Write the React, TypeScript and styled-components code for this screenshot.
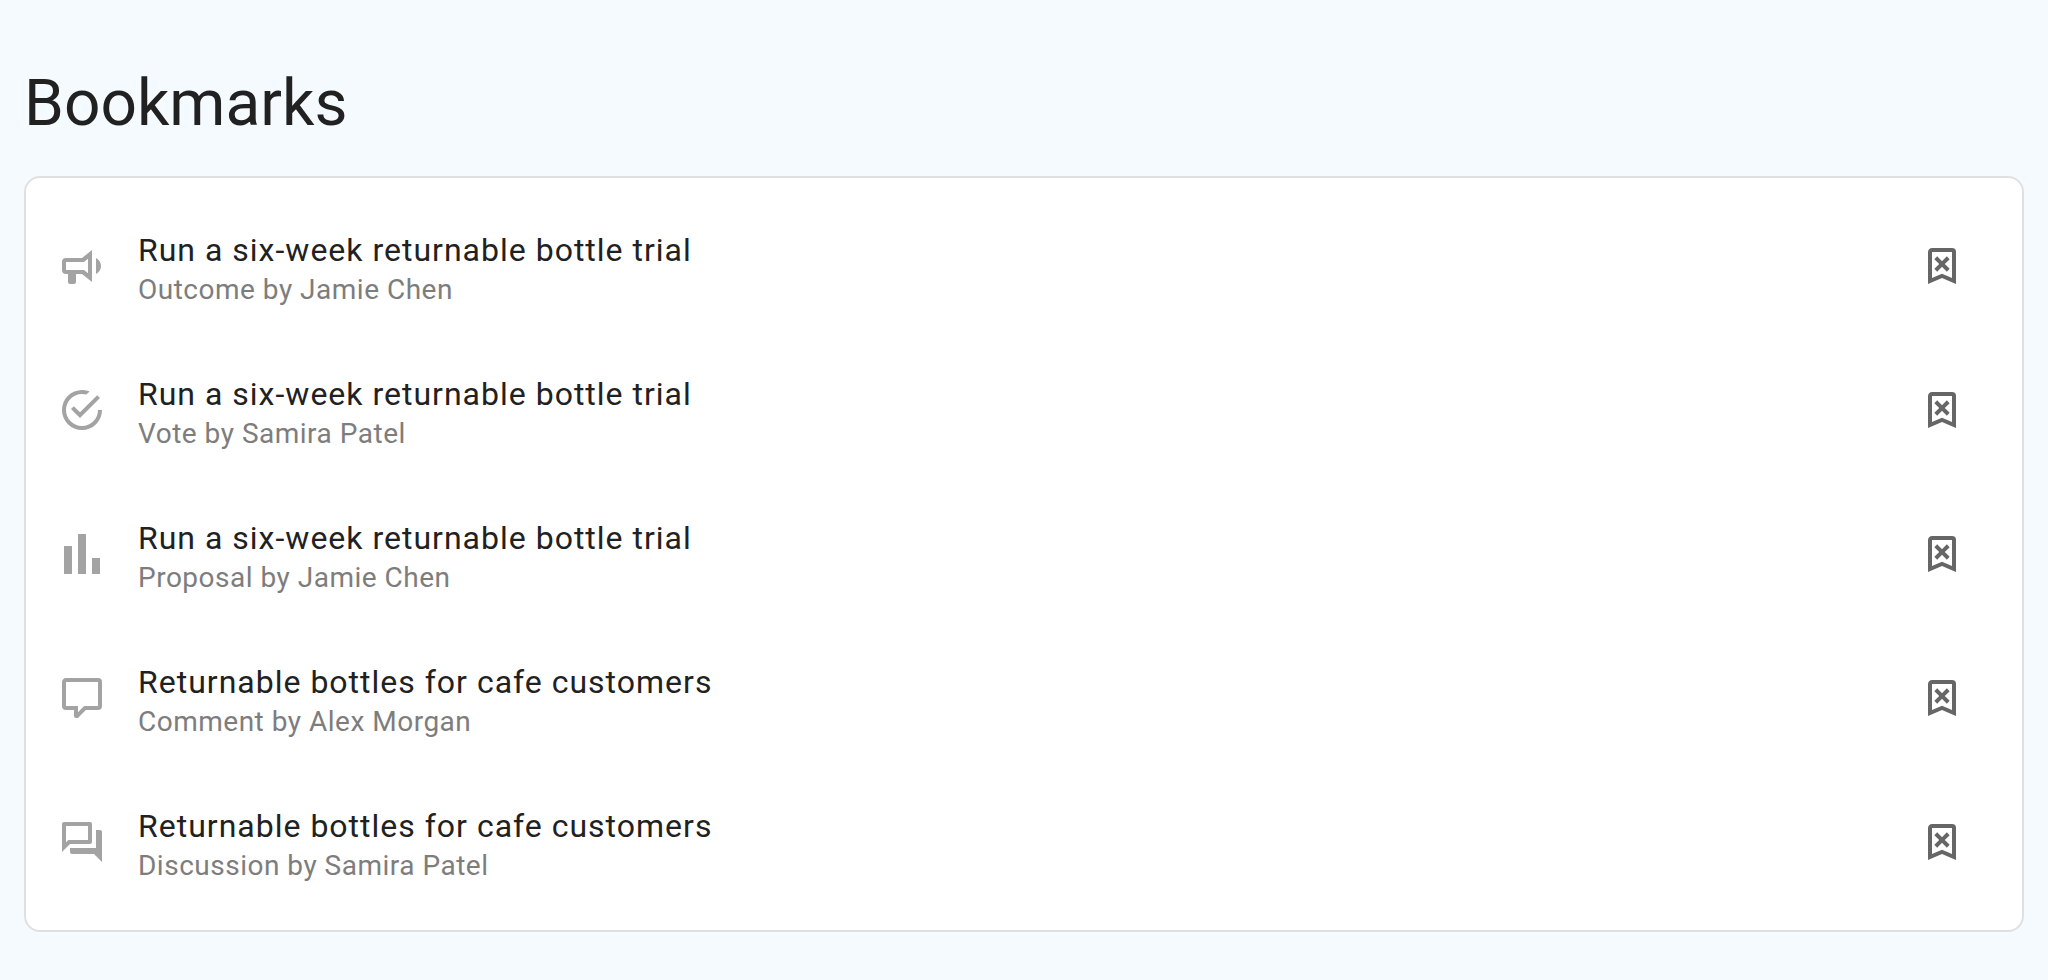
import React from "react";
import styled, { createGlobalStyle } from "styled-components";

const GlobalStyle = createGlobalStyle`
  *, *::before, *::after { box-sizing: border-box; }
  body {
    margin: 0;
    background: #f5faff;
    color: #212121;
    font-family: Roboto, "Liberation Sans", sans-serif;
    -webkit-font-smoothing: antialiased;
  }
`;

const Page = styled.main`
  padding: 64px 24px 40px;
`;

const Heading = styled.h1`
  margin: 0 0 32px;
  font-size: 64px;
  font-weight: 400;
  line-height: 80px;
`;

const Card = styled.ul`
  margin: 0;
  padding: 16px 0;
  list-style: none;
  background: #fff;
  border: 2px solid #e0e0e0;
  border-radius: 16px;
`;

const Row = styled.li`
  display: flex;
  align-items: center;
  gap: 32px;
  min-height: 144px;
  padding: 0 32px;
`;

const Icon = styled.svg<{ $color: string }>`
  display: block;
  flex: none;
  width: 48px;
  height: 48px;
  fill: ${(p) => p.$color};
`;

const ItemLink = styled.a`
  flex: 1;
  min-width: 0;
  padding-top: 8px;
  color: inherit;
  text-decoration: none;
`;

const Title = styled.div`
  font-size: 32px;
  line-height: 40px;
  letter-spacing: 1px;
`;

const Subtitle = styled.div`
  color: #7d7d7d;
  font-size: 28px;
  line-height: 40px;
  letter-spacing: 0.0178571em;
`;

const RemoveButton = styled.button`
  display: grid;
  flex: none;
  place-items: center;
  width: 96px;
  height: 96px;
  padding: 0;
  background: none;
  border: 0;
  border-radius: 50%;
  cursor: pointer;

  &:hover { background: #f5f5f5; }
`;

const icons = {
  outcome:
    "M12,8H4A2,2 0 0,0 2,10V14A2,2 0 0,0 4,16H5V20A1,1 0 0,0 6,21H8A1,1 0 0,0 9,20V16H12L17,20V4L12,8M15,15.6L13,14H4V10H13L15,8.4V15.6M21.5,12C21.5,13.71 20.54,15.26 19,16V8C20.53,8.75 21.5,10.3 21.5,12Z",
  vote:
    "M20,12A8,8 0 0,1 12,20A8,8 0 0,1 4,12A8,8 0 0,1 12,4C12.76,4 13.5,4.11 14.2,4.31L15.77,2.74C14.61,2.26 13.34,2 12,2A10,10 0 0,0 2,12A10,10 0 0,0 12,22A10,10 0 0,0 22,12M7.91,10.08L6.5,11.5L11,16L21,6L19.59,4.58L11,13.17L7.91,10.08Z",
  proposal: "M3,22V8H7V22H3M10,22V2H14V22H10M17,22V14H21V22H17Z",
  comment:
    "M9,22A1,1 0 0,1 8,21V18H4A2,2 0 0,1 2,16V4C2,2.89 2.9,2 4,2H20A2,2 0 0,1 22,4V16A2,2 0 0,1 20,18H13.9L10.2,21.71C10,21.9 9.75,22 9.5,22H9M10,16V19.08L13.08,16H20V4H4V16H10Z",
  discussion:
    "M15,4V11H5.17L4,12.17V4H15M16,2H3A1,1 0 0,0 2,3V17L6,13H16A1,1 0 0,0 17,12V3A1,1 0 0,0 16,2M21,6H19V15H6V17A1,1 0 0,0 7,18H18L22,22V7A1,1 0 0,0 21,6Z",
  remove:
    "M17,3A2,2 0 0,1 19,5V21L12,18L5,21V5C5,3.89 5.9,3 7,3H17M17,18V5H7V18L12,15.82L17,18M8.17,8.58L9.59,7.17L12,9.59L14.41,7.17L15.83,8.58L13.41,11L15.83,13.41L14.41,14.83L12,12.41L9.59,14.83L8.17,13.41L10.59,11L8.17,8.58Z",
};

type Bookmark = { icon: keyof typeof icons; title: string; subtitle: string };

const bookmarks: Bookmark[] = [
  { icon: "outcome", title: "Run a six-week returnable bottle trial", subtitle: "Outcome by Jamie Chen" },
  { icon: "vote", title: "Run a six-week returnable bottle trial", subtitle: "Vote by Samira Patel" },
  { icon: "proposal", title: "Run a six-week returnable bottle trial", subtitle: "Proposal by Jamie Chen" },
  { icon: "comment", title: "Returnable bottles for cafe customers", subtitle: "Comment by Alex Morgan" },
  { icon: "discussion", title: "Returnable bottles for cafe customers", subtitle: "Discussion by Samira Patel" },
];

function MdiIcon({ name, color }: { name: keyof typeof icons; color: string }) {
  return (
    <Icon $color={color} viewBox="0 0 24 24" aria-hidden="true">
      <path d={icons[name]} />
    </Icon>
  );
}

export default function App() {
  return (
    <>
      <GlobalStyle />
      <Page>
        <Heading>Bookmarks</Heading>
        <Card>
          {bookmarks.map((b) => (
            <Row key={b.icon}>
              <MdiIcon name={b.icon} color="#a3a3a3" />
              <ItemLink href={`#${b.icon}`}>
                <Title>{b.title}</Title>
                <Subtitle>{b.subtitle}</Subtitle>
              </ItemLink>
              <RemoveButton type="button" aria-label="Remove bookmark">
                <MdiIcon name="remove" color="#666666" />
              </RemoveButton>
            </Row>
          ))}
        </Card>
      </Page>
    </>
  );
}
